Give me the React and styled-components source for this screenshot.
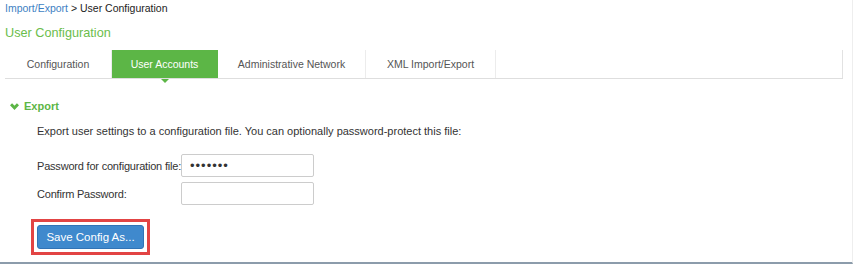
import React from 'react';
import styled, { createGlobalStyle } from 'styled-components';

const tabs = [
	{ title: 'Configuration', width: 107 },
	{ title: 'User Accounts', width: 106 },
	{ title: 'Administrative Network', width: 148 },
	{ title: 'XML Import/Export', width: 130 },
];

const GlobalStyle = createGlobalStyle`
	html, body {
		margin: 0;
		padding: 0;
		background: #fff;
	}
	body {
		font-family: "Liberation Sans", Arial, sans-serif;
		font-size: 11px;
		color: #333;
	}
`;

function App() {
	return (
		<Page>
			<GlobalStyle />
			<Breadcrumb>
				<CrumbLink>Import/Export</CrumbLink> &gt; User Configuration
			</Breadcrumb>
			<Title>User Configuration</Title>
			<TabBar>
				{tabs.map((t) => (
					<Tab key={t.title} $w={t.width} $active={t.title === 'User Accounts'}>{t.title}</Tab>
				))}
				<TabFill />
			</TabBar>
			<Section>
				<SectionHead>
					<svg width="9" height="7" viewBox="0 0 9 7">
						<polyline points="1,1.2 4.5,4.8 8,1.2" fill="none" stroke="#5cb646" strokeWidth="3" />
					</svg>
					Export
				</SectionHead>
				<Body>
					<Text>Export user settings to a configuration file. You can optionally password-protect this file:</Text>
					<Form>
						<Label>Password for configuration file:</Label>
						<Input type="password" defaultValue="1234567" />
						<Label>Confirm Password:</Label>
						<Input type="password" />
					</Form>
					<Highlight>
						<SaveBtn>Save Config As...</SaveBtn>
					</Highlight>
				</Body>
			</Section>
		</Page>
	);
}

const Page = styled.div`
	width: 853px;
	height: 264px;
	padding-left: 5px;
	box-sizing: border-box;
	border-right: 1px solid #eee;
	border-bottom: 2px solid #8c9cab;
	overflow: hidden;
`;

const Breadcrumb = styled.div`
	height: 16px;
	line-height: 16px;
	font-size: 10.5px;
	color: #222;
`;

const CrumbLink = styled.span`
	color: #3e7fc3;
`;

const Title = styled.h1`
	margin: 8px 0 8px 0;
	height: 18px;
	line-height: 18px;
	font-size: 12.7px;
	font-weight: normal;
	color: #6bbd4c;
`;

const TabBar = styled.div`
	display: flex;
	width: 838px;
	height: 28px;
	border-bottom: 1px solid #dedede;
`;

const Tab = styled.div`
	position: relative;
	display: flex;
	align-items: center;
	justify-content: center;
	box-sizing: border-box;
	width: ${(p) => p.$w}px;
	border-right: 1px solid ${(p) => (p.$active ? '#5cb646' : '#ececec')};
	background: ${(p) => (p.$active ? '#5cb646' : '#fff')};
	color: ${(p) => (p.$active ? '#fff' : '#555')};
	font-size: 10.5px;
	white-space: nowrap;

	&::after {
		content: '';
		display: ${(p) => (p.$active ? 'block' : 'none')};
		position: absolute;
		left: 50%;
		bottom: -5px;
		margin-left: -4px;
		border-left: 4px solid transparent;
		border-right: 4px solid transparent;
		border-top: 4px solid #5cb646;
	}
`;

const TabFill = styled.div`
	flex: 1;
	border-right: 1px solid #e2e2e2;
`;

const Section = styled.div`
	padding: 19px 0 0 5px;
`;

const SectionHead = styled.div`
	display: flex;
	align-items: center;
	gap: 5px;
	height: 16px;
	font-size: 11px;
	font-weight: bold;
	color: #5cb646;
`;

const Body = styled.div`
	padding-left: 27px;
`;

const Text = styled.p`
	margin: 9px 0 0 0;
	line-height: 16px;
	font-size: 11px;
	color: #333;
`;

const Form = styled.div`
	display: grid;
	grid-template-columns: 144px 133px;
	row-gap: 5px;
	align-items: center;
	margin-top: 15px;
`;

const Label = styled.label`
	font-size: 11px;
	letter-spacing: -0.2px;
	color: #333;
	white-space: nowrap;
`;

const Input = styled.input`
	box-sizing: border-box;
	width: 133px;
	height: 23px;
	padding: 0 8px;
	border: 1px solid #ccc;
	border-radius: 2px;
	font-family: "Liberation Sans", Arial, sans-serif;
	font-size: 13px;
	color: #333;
	letter-spacing: 1px;
	outline: none;
`;

const Highlight = styled.div`
	display: inline-block;
	margin: 14px 0 0 -6px;
	padding: 3px;
	border: 3px solid #e24444;
`;

const SaveBtn = styled.button`
	display: block;
	width: 107px;
	height: 24px;
	padding: 0;
	border: 1px solid #3173b5;
	border-radius: 3px;
	background: #3f89cd;
	color: #fff;
	font-family: "Liberation Sans", Arial, sans-serif;
	font-size: 11.5px;
`;

export default App;
